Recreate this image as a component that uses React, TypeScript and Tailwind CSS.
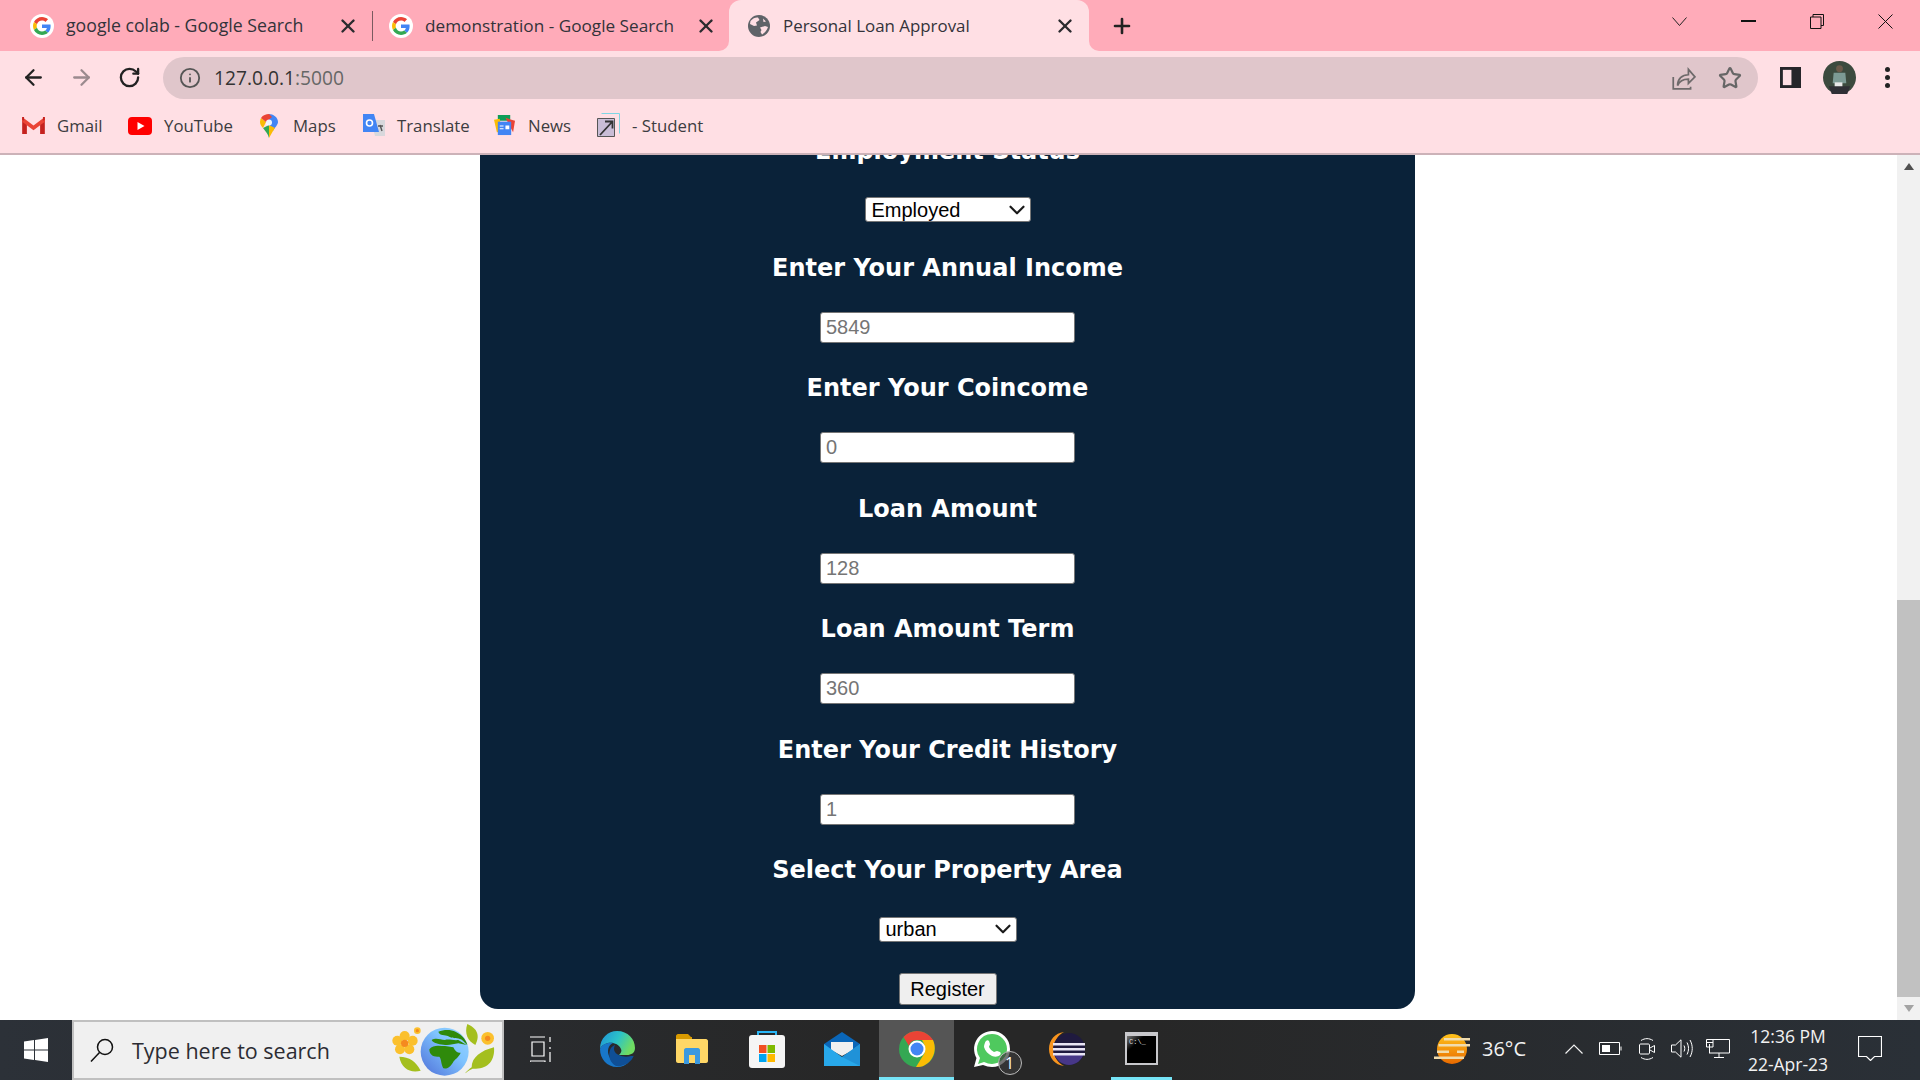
import React from "react";
import { ArrowLeft, ArrowRight, RotateCw, Info, Star, X, Plus, ChevronDown } from "lucide-react";

const GoogleG = () => (
  <span className="flex h-6 w-6 shrink-0 items-center justify-center rounded-full bg-white">
    <svg viewBox="0 0 48 48" className="h-[18px] w-[18px]">
      <path fill="#EA4335" d="M24 9.5c3.54 0 6.71 1.22 9.21 3.6l6.85-6.85C35.9 2.38 30.47 0 24 0 14.62 0 6.51 5.38 2.56 13.22l7.98 6.19C12.43 13.72 17.74 9.5 24 9.5z" />
      <path fill="#4285F4" d="M46.98 24.55c0-1.57-.15-3.09-.38-4.55H24v9.02h12.94c-.58 2.96-2.26 5.48-4.78 7.18l7.73 6c4.51-4.18 7.09-10.36 7.09-17.65z" />
      <path fill="#FBBC05" d="M10.53 28.59c-.48-1.45-.76-2.99-.76-4.59s.27-3.14.76-4.59l-7.98-6.19C.92 16.46 0 20.12 0 24c0 3.88.92 7.54 2.56 10.78l7.97-6.19z" />
      <path fill="#34A853" d="M24 48c6.48 0 11.93-2.13 15.89-5.81l-7.73-6c-2.15 1.45-4.92 2.3-8.16 2.3-6.26 0-11.57-4.22-13.47-9.91l-7.98 6.19C6.51 42.62 14.62 48 24 48z" />
    </svg>
  </span>
);

const GlobeFav = () => (
  <svg viewBox="0 0 22 22" className="h-[22px] w-[22px] shrink-0">
    <circle cx="11" cy="11" r="11" fill="#5f6368" />
    <path fill="#ffdfe4" d="M2.500 6C5 3 8 2 10 2.500L11.500 5 8 7.500 9 10.500 6 11 2 9zM12 12.500l5-1.500 3 1c-1 3-3 6-6 7.500l-1.500-2.500 1-2zM15 3.500l3 3-2.500.5z" />
  </svg>
);

const Tab = ({ title, active, icon, className, textClass }: { title: string; active?: boolean; icon: React.ReactNode; className: string; textClass: string }) => (
  <div className={`relative flex h-full shrink-0 items-center ${className} ${active ? "rounded-t-[12px] bg-[#ffdfe4]" : ""}`}>
    {icon}
    <span className={`flex-1 truncate text-[#33333a] ${textClass}`}>{title}</span>
    <X size={22} strokeWidth={2.6} className="shrink-0 text-[#2a2a2e]" />
    {active && (
      <>
        <span className="absolute bottom-0 -left-[10px] h-[10px] w-[10px] bg-[#ffdfe4]">
          <span className="block h-full w-full rounded-br-[10px] bg-[#ffabb9]" />
        </span>
        <span className="absolute bottom-0 -right-[10px] h-[10px] w-[10px] bg-[#ffdfe4]">
          <span className="block h-full w-full rounded-bl-[10px] bg-[#ffabb9]" />
        </span>
      </>
    )}
  </div>
);

const Bookmark = ({ icon, label, className }: { icon: React.ReactNode; label: string; className: string }) => (
  <div className={`flex shrink-0 items-center ${className}`}>
    {icon}
    <span className="text-[16.8px] text-[#3c3c40]">{label}</span>
  </div>
);

const headingClass = "text-[24px] font-bold leading-[28px] text-white [font-family:'DejaVu_Sans',sans-serif]";

const Field = ({ label, value }: { label: string; value: string }) => (
  <div className="flex h-[120.4px] flex-col items-center">
    <h2 className={headingClass}>{label}</h2>
    <input
      placeholder={value}
      className="mt-[30px] h-[31px] w-[255px] rounded-[3px] border border-[#767676] bg-white px-[5px] text-[20px] placeholder:text-[#757575]"
    />
  </div>
);

const Dropdown = ({ value, className }: { value: string; className: string }) => (
  <div className={`relative h-[25px] ${className}`}>
    <select className="h-full w-full appearance-none rounded-[3px] border border-[#767676] bg-white pl-[6px] text-[20px] leading-[22px] text-black [font-family:'Liberation_Sans',sans-serif]">
      <option>{value}</option>
    </select>
    <span className="pointer-events-none absolute inset-y-0 right-[1px] flex items-center">
      <ChevronDown size={26} strokeWidth={2} className="text-[#1a1a1a]" />
    </span>
  </div>
);

const TaskSlot = ({ children, active, line }: { children: React.ReactNode; active?: boolean; line?: boolean }) => (
  <div className={`relative flex h-full w-[75px] shrink-0 items-center justify-center pb-[3px] ${active ? "bg-[#555555]" : ""}`}>
    {children}
    {(active || line) && <span className={`absolute bottom-0 h-[3px] bg-[#76e4f7] ${active ? "inset-x-0" : "inset-x-[7px]"}`} />}
  </div>
);

export default function App() {
  return (
    <div className="flex h-screen w-screen flex-col overflow-hidden bg-white [font-family:'Open_Sans',sans-serif]">
      {/* tab strip */}
      <div className="flex h-[51px] shrink-0 items-center bg-[#ffabb9]">
        <Tab title="google colab - Google Search" icon={<GoogleG />} className="w-[372px] pl-[30px] pr-[13px]" textClass="ml-[12px] text-[17.7px]" />
        <span className="h-[30px] w-px shrink-0 bg-[#7a5a60]" />
        <Tab title="demonstration - Google Search" icon={<GoogleG />} className="w-[356px] pl-[16px] pr-[12px]" textClass="ml-[12px] text-[17.2px]" />
        <Tab title="Personal Loan Approval" active icon={<GlobeFav />} className="w-[360px] pl-[19px] pr-[13px]" textClass="ml-[13px] text-[16.9px]" />
        <Plus size={24} strokeWidth={2.6} className="ml-[21px] text-[#222]" />
        <div className="ml-auto flex items-center pb-[9px] pr-[27px]">
          <svg viewBox="0 0 15 9" className="h-[9px] w-[15px]" fill="none" stroke="#222" strokeWidth="1">
            <path d="M.5.500l7 8 7-8" />
          </svg>
          <span className="ml-[54px] h-[1.500px] w-[15px] bg-[#111]" />
          <svg viewBox="0 0 14 15" className="ml-[54px] h-[15px] w-[14px]" fill="none" stroke="#111" strokeWidth="1">
            <path d="M3 3V.5h10.500v11H11" />
            <path d="M.5 3h10.500v11.500H.5z" />
          </svg>
          <svg viewBox="0 0 15 15" className="ml-[54px] h-[15px] w-[15px]" fill="none" stroke="#111" strokeWidth="1">
            <path d="M.5.500l14 14M14.500.500l-14 14" />
          </svg>
        </div>
      </div>

      {/* toolbar */}
      <div className="flex h-[51px] shrink-0 items-center bg-[#ffdfe4] pb-[2px] pt-[4px]">
        <ArrowLeft size={25} strokeWidth={2.2} className="ml-[21px] shrink-0 text-[#222]" />
        <ArrowRight size={25} strokeWidth={2.2} className="ml-[23px] shrink-0 text-[#9b8a8e]" />
        <RotateCw size={23} strokeWidth={2.4} className="ml-[24px] shrink-0 text-[#222]" />
        <div className="ml-[22px] flex h-[42px] flex-1 items-center rounded-full bg-[#e0c6cb] pl-[16px] pr-[16px]">
          <Info size={22} strokeWidth={2} className="text-[#555]" />
          <span className="ml-[13px] pt-[1px] text-[19.2px] text-[#333]">
            127.0.0.1<span className="text-[#666]">:5000</span>
          </span>
          <svg viewBox="0 0 24 24" className="ml-auto h-[26px] w-[26px]" fill="none" stroke="#6e6a6b" strokeWidth="1.600">
            <path d="M3 11v11h16v-2" />
            <path d="M7 19c0-6 4-10 10-10V4l6 7-6 6v-4c-4 0-8 1-10 6z" />
          </svg>
          <Star size={24} strokeWidth={2.2} className="ml-[22px] text-[#666]" />
        </div>
        <svg viewBox="0 0 22 22" className="ml-[22px] h-[21px] w-[21px] shrink-0">
          <path fill="#26262a" d="M0 0h22v22H0z" />
          <path fill="#ffdfe4" d="M3 3h9v16H3z" />
        </svg>
        <svg viewBox="0 0 34 34" className="ml-[22px] h-[33px] w-[33px] shrink-0">
          <circle cx="17" cy="17" r="17" fill="#3c4a3e" />
          <circle cx="17" cy="8" r="3.500" fill="#6b5a4a" />
          <path fill="#7c9a94" d="M11 12h12l1 11H10z" />
          <path fill="#e8e8e8" d="M12 22h8v6h-8z" />
          <path fill="#2f2f35" d="M6 26h22l-3 8H9z" />
        </svg>
        <div className="ml-[29px] mr-[30px] flex shrink-0 flex-col gap-[3px]">
          <span className="h-[5px] w-[5px] rounded-full bg-[#222]" />
          <span className="h-[5px] w-[5px] rounded-full bg-[#222]" />
          <span className="h-[5px] w-[5px] rounded-full bg-[#222]" />
        </div>
      </div>

      {/* bookmarks */}
      <div className="flex h-[53px] shrink-0 items-center border-b-2 border-[#ccb2b8] bg-[#ffdfe4] pb-[4px] pl-[22px]">
        <Bookmark
          className="w-[106px] gap-[12px]"
          label="Gmail"
          icon={
            <svg viewBox="0 0 24 18" className="h-[17px] w-[23px]">
              <path fill="#C5221F" d="M0 2v16h5V7z" />
              <path fill="#C5221F" d="M24 2v16h-5V7z" />
              <path fill="#EA4335" d="M0 0l12 9 12-9v5l-12 9L0 5z" />
              <path fill="#C5221F" d="M0 0h2v4l-2-1zM24 0h-2v4l2-1z" />
            </svg>
          }
        />
        <Bookmark
          className="w-[132px] gap-[12px]"
          label="YouTube"
          icon={
            <svg viewBox="0 0 24 18" className="h-[18px] w-[24px]">
              <rect width="24" height="18" rx="4" fill="#FF0000" />
              <path fill="#fff" d="M9.500 5l7 4-7 4z" />
            </svg>
          }
        />
        <Bookmark
          className="w-[103px] gap-[15px]"
          label="Maps"
          icon={
            <svg viewBox="0 0 18 24" className="h-[24px] w-[18px]">
              <path fill="#34A853" d="M9 24c-1-4-3-6-6-10l6-3z" />
              <path fill="#FBBC04" d="M3 14C1 12 0 10 0 8c0-1 .3-2 1-4l5 4z" />
              <path fill="#4285F4" d="M9 0c4 0 9 3 9 8 0 3-3 5-5 9L6 8z" />
              <path fill="#EA4335" d="M1 4c2-3 5-4 8-4l3 3-6 5z" />
              <path fill="#FBBC04" d="M9 24l4-7 2-3-6-3z" />
              <circle cx="9" cy="8.500" r="3" fill="#fff" opacity="0.9" />
            </svg>
          }
        />
        <Bookmark
          className="w-[131px] gap-[12px]"
          label="Translate"
          icon={
            <svg viewBox="0 0 22 24" className="h-[24px] w-[22px]">
              <path fill="#d8d8dc" d="M8 6h14v16H12z" />
              <path fill="#4285F4" d="M0 0h11l5 18H0z" />
              <circle cx="6.500" cy="9" r="3" fill="none" stroke="#fff" strokeWidth="1.600" />
              <path stroke="#555" strokeWidth="1.400" d="M15 12h5M17 11l2 6" />
            </svg>
          }
        />
        <Bookmark
          className="w-[103px] gap-[13px]"
          label="News"
          icon={
            <svg viewBox="0 0 22 22" className="h-[21px] w-[21px]">
              <path fill="#0F9D58" d="M4 0h13v6H4z" />
              <path fill="#EA4335" d="M12 3l10 3-2 12z" />
              <path fill="#FBBC04" d="M0 5l6-1 2 14H3z" />
              <path fill="#4285F4" d="M4 7h14v14H4z" />
              <path fill="#fff" d="M6 11h4v1H6zM6 14h4v1H6zM12 11h4v4h-4z" />
            </svg>
          }
        />
        <Bookmark
          className="w-[120px] gap-[12px]"
          label="- Student"
          icon={
            <svg viewBox="0 0 23 25" className="h-[25px] w-[23px]" fill="none">
              <path stroke="#7fd6e4" d="M4.500.5h18v20" />
              <path fill="#c9bdd6" stroke="#555" d="M.5 5.500h17v18H.5z" />
              <path stroke="#333" strokeWidth="1.800" d="M3 22L15 9M8 8.500h7.500v7" />
            </svg>
          }
        />
      </div>

      {/* page viewport */}
      <div className="flex min-h-0 flex-1">
        <div className="flex-1 overflow-hidden">
          <div className="ml-[480px] -mt-[24px] flex h-[878px] w-[935px] flex-col items-center rounded-b-[18px] bg-[#0a2239] pt-[6px]">
            <h2 className={headingClass}>Employment Status</h2>
            <Dropdown value="Employed" className="mb-[32px] mt-[32px] w-[166px]" />
            <div className="[font-family:'Liberation_Sans',sans-serif]">
              <Field label="Enter Your Annual Income" value="5849" />
              <Field label="Enter Your Coincome" value="0" />
              <Field label="Loan Amount" value="128" />
              <Field label="Loan Amount Term" value="360" />
              <Field label="Enter Your Credit History" value="1" />
            </div>
            <h2 className={headingClass}>Select Your Property Area</h2>
            <Dropdown value="urban" className="mt-[33px] w-[138px]" />
            <button className="mt-[31px] h-[32px] w-[98px] rounded-[3px] border border-[#767676] bg-[#efefef] text-[20px] text-black [font-family:'Liberation_Sans',sans-serif]">
              Register
            </button>
          </div>
        </div>
        {/* scrollbar */}
        <div className="flex w-[23px] shrink-0 flex-col items-center bg-[#f1f1f1]">
          <div className="flex h-[23px] w-full shrink-0 items-center justify-center">
            <span className="h-0 w-0 border-x-[5.5px] border-b-[7px] border-x-transparent border-b-[#505050]" />
          </div>
          <div className="mt-[422px] h-[398px] w-full bg-[#c1c1c1]" />
          <div className="mt-auto flex h-[23px] w-full shrink-0 items-center justify-center">
            <span className="h-0 w-0 border-x-[5.5px] border-t-[7px] border-x-transparent border-t-[#a3a3a3]" />
          </div>
        </div>
      </div>

      {/* taskbar */}
      <div className="flex h-[60px] shrink-0 items-center bg-[linear-gradient(90deg,#2c3138_0%,#272727_45%,#272727_60%,#2a3037_100%)] text-white">
        <div className="flex h-full w-[72px] shrink-0 items-center justify-center">
          <svg viewBox="0 0 24 24" className="h-[24px] w-[24px]" fill="#fff">
            <path d="M0 3.500l10-1.400v9.400H0zM11 2l13-2v11.500H11zM0 12.500h10v9.400L0 20.500zM11 12.500h13V24l-13-2z" />
          </svg>
        </div>
        <div className="flex h-full w-[432px] shrink-0 items-center border-2 border-[#c0c0c0] bg-[#f0f0f0] pl-[16px]">
          <svg viewBox="0 0 24 24" className="h-[24px] w-[24px] shrink-0" fill="none" stroke="#111" strokeWidth="1.500">
            <circle cx="15" cy="9" r="7.500" />
            <path d="M9.500 14.500L1 23.500" />
          </svg>
          <span className="ml-[18px] pt-[2px] text-[21.5px] text-[#2c2c33]">Type here to search</span>
          <svg viewBox="0 2 112 56" className="ml-auto h-[56px] w-[112px] shrink-0">
            <defs>
              <linearGradient id="earth" x1="0" y1="1" x2="1" y2="0">
                <stop offset="0" stopColor="#4f6fd8" />
                <stop offset="0.6" stopColor="#7fc4ff" />
                <stop offset="1" stopColor="#9ad4ff" />
              </linearGradient>
            </defs>
            <g transform="scale(0.3333)">
              <g fill="#fbc02d">
                <circle cx="44" cy="48" r="15" />
                <circle cx="68" cy="62" r="15" />
                <circle cx="58" cy="88" r="15" />
                <circle cx="30" cy="88" r="15" />
                <circle cx="22" cy="62" r="15" />
                <circle cx="82" cy="32" r="10" />
                <circle cx="293" cy="55" r="19" />
              </g>
              <circle cx="44" cy="70" r="11" fill="#f58a1f" />
              <circle cx="82" cy="32" r="5" fill="#f58a1f" />
              <circle cx="293" cy="55" r="8" fill="#f58a1f" />
              <path fill="#a4bf1e" d="M232 12c24 10 42 30 24 63-22-12-34-34-24-63zM28 110c30 0 50 14 64 42-30 8-58-6-64-42zM312 82c4 40-20 68-62 64-6 0-16 8-25 14 8-8 14-14 20-18 0-30 28-50 67-60z" />
              <circle cx="164" cy="95" r="72" fill="url(#earth)" />
              <path fill="#2f8a0b" d="M145 35c25-10 55-7 77 20 4 6 8 12 10 20-10-8-14-16-22-18-12-4-24 0-35-8-10-6-25 0-30-14zM125 60c15-8 25 0 40 0 10-4 25 2 40 0l25 15-25-5c-15 2-30 8-45 4-15-2-30-4-35-14zM118 88c12-16 32-10 47-10l25 4c6 13 15 18 22 16-6 14-17 20-22 27-5 10-15 23-30 20-8-15-5-27-12-35-18 2-30-5-30-22z" />
            </g>
          </svg>
        </div>
        <div className="flex h-full w-[75px] shrink-0 items-center justify-center">
          <svg viewBox="0 0 24 28" className="h-[28px] w-[24px]" fill="none" stroke="#fff" strokeWidth="1.200">
            <path d="M0 1h15M2 6h12v14H2zM0 26V25h15v1M20 1v5M20 11v2M20 16v10" />
          </svg>
        </div>
        <TaskSlot>
          <svg viewBox="0 0 36 36" className="h-[36px] w-[36px]">
            <defs>
              <linearGradient id="edge" x1="0" y1="0" x2="1" y2="0.4">
                <stop offset="0" stopColor="#1d8fd8" />
                <stop offset="0.55" stopColor="#2cc3c8" />
                <stop offset="1" stopColor="#6fdc62" />
              </linearGradient>
            </defs>
            <path fill="url(#edge)" d="M1 18C1 7 9 0 18 0c11 0 18 8 18 17 0 5-4 7-8 7h-8c2-2 3-4 2-6-2-5-8-7-13-6-4 1-7 3-8 6z" />
            <path fill="#1877c9" d="M1 18c2-5 8-7 13-6-5 2-6 8-4 13 3 7 12 11 20 6-3 3-7 5-12 5C8 36 1 28 1 18z" />
            <path fill="#0f4f96" d="M20 24c4 2 8 2 12 1 2 0 3 0 3-1-2 7-10 12-18 11-6-3-8-10-6-16 1-3 3-4 5-5-2 4-1 8 4 10z" />
          </svg>
        </TaskSlot>
        <TaskSlot>
          <svg viewBox="0 0 32 30" className="h-[30px] w-[32px]">
            <path fill="#d99a00" d="M0 2c0-1 1-2 2-2h10l3 3h1v6H0z" />
            <path fill="#ffd766" d="M0 5h30c1 0 2 1 2 2v20c0 1-1 2-2 2H2c-1 0-2-1-2-2z" />
            <path fill="#3b99e0" d="M8 16c0-1 1-2 2-2h12c1 0 2 1 2 2v14h-5v-9h-6v9H8z" />
          </svg>
        </TaskSlot>
        <TaskSlot>
          <svg viewBox="0 0 36 38" className="h-[38px] w-[36px]">
            <path fill="none" stroke="#29b6f6" strokeWidth="2" d="M9 8V2h18v6" />
            <rect y="5" width="36" height="33" rx="3" fill="#f5f5f5" />
            <path fill="#f25022" d="M10 15h7.500v8H10z" />
            <path fill="#7fba00" d="M18.500 15H26v8h-7.500z" />
            <path fill="#00a4ef" d="M10 24h7.500v8H10z" />
            <path fill="#ffb900" d="M18.500 24H26v8h-7.500z" />
          </svg>
        </TaskSlot>
        <TaskSlot>
          <svg viewBox="0 0 36 34" className="h-[34px] w-[36px]">
            <path fill="#0a66b8" d="M18 0L36 12v8H0v-8z" />
            <path fill="#f0f0f0" d="M7 10h22v8l-11 6-11-6z" />
            <path fill="#28a8ea" d="M0 12l18 13 18-13v22H0z" />
            <path fill="#1b83cc" d="M18 25l18-13v22z" opacity="0.6" />
          </svg>
        </TaskSlot>
        <TaskSlot active>
          <svg viewBox="0 0 36 36" className="h-[36px] w-[36px]">
            <circle cx="18" cy="18" r="18" fill="#34a853" />
            <path fill="#ea4335" d="M18 0c7 0 13 4 16 9H18c-4 0-7 2-8 6L4.500 6C8 2 13 0 18 0z" />
            <path fill="#fbbc05" d="M34 9c4 9 1 20-8 25-3 2-6 2-9 2l8-13c2-4 1-9-2-14z" />
            <circle cx="18" cy="18" r="8.500" fill="#fff" />
            <circle cx="18" cy="18" r="6.500" fill="#4285f4" />
          </svg>
        </TaskSlot>
        <TaskSlot>
          <div className="relative">
            <svg viewBox="0 0 36 36" className="h-[36px] w-[36px]">
              <path fill="#fff" d="M18 0a18 18 0 0 1 0 36c-3 0-6-1-9-2l-9 2 2.500-9A18 18 0 0 1 18 0z" />
              <path fill="#4fc95e" d="M18 3a15 15 0 0 1 0 30c-3 0-5-1-8-2l-6 2 2-6A15 15 0 0 1 18 3z" />
              <path fill="#fff" d="M12 10c1-1 2-1 3 0l1 3c0 1-1 2-1 3 1 2 3 4 5 5 1 0 2-1 3-1l3 1c1 1 1 2 0 3-2 2-5 2-8 1-4-2-7-5-8-9 0-2 1-5 2-6z" />
            </svg>
            <span className="absolute -bottom-[8px] -right-[12px] flex h-[24px] w-[24px] items-center justify-center rounded-full border border-[#bbb] bg-[#3a3a3a]/70 text-[16px] leading-none">1</span>
          </div>
        </TaskSlot>
        <TaskSlot>
          <svg viewBox="0 0 36 34" className="h-[34px] w-[36px]">
            <path fill="#f7941e" d="M15 0C6 1 0 8 0 17s6 16 15 17C9 31 5 25 5 17S9 3 15 0z" />
            <circle cx="20" cy="17" r="16" fill="#1f1a3f" />
            <path fill="#473788" d="M5 21h30c-2 7-8 12-15 12S7 28 5 21z" />
            <path fill="#e8e4f4" d="M4 11h32v2.500H4zM4 16h32v2.500H4zM4 21h32v2.500H4z" />
          </svg>
        </TaskSlot>
        <TaskSlot line>
          <svg viewBox="0 0 33 33" className="h-[33px] w-[33px]">
            <defs>
              <linearGradient id="cmd" x1="0" y1="0" x2="0.6" y2="0.6">
                <stop offset="0" stopColor="#777" />
                <stop offset="0.5" stopColor="#000" />
              </linearGradient>
            </defs>
            <rect width="33" height="33" fill="#c8c8cc" />
            <rect x="2" y="4" width="29" height="27" fill="url(#cmd)" />
            <text x="4" y="12" fontSize="7" fill="#ddd" fontFamily="Liberation Mono">C:\_</text>
          </svg>
        </TaskSlot>

        {/* tray */}
        <div className="ml-auto flex h-full items-center pb-[3px] text-[#f2f2f2]">
          <svg viewBox="5 10 36 30" className="h-[30px] w-[36px] shrink-0">
            <defs>
              <linearGradient id="sun" x1="0" y1="0" x2="0" y2="1">
                <stop offset="0" stopColor="#ffc21a" />
                <stop offset="1" stopColor="#e96a00" />
              </linearGradient>
            </defs>
            <circle cx="23" cy="25" r="15" fill="url(#sun)" />
            <path fill="#f0dcae" d="M15 14h26v2.500H15zM9.500 20H41v2.500H9.500zM8 26.500h12V29H8zM28 26.500h7V29h-7zM5 32.500h30V35H5z" />
          </svg>
          <span className="ml-[12px] w-[44px] text-[20px]">36°C</span>
          <svg viewBox="0 0 18 10" className="ml-[39px] h-[10px] w-[18px] shrink-0" fill="none" stroke="#f2f2f2" strokeWidth="1.200">
            <path d="M.5 9.500L9 1l8.500 8.500" />
          </svg>
          <svg viewBox="0 0 23 13" className="ml-[16px] h-[13px] w-[23px] shrink-0" fill="none" stroke="#fff">
            <path d="M.5.500h20v12H.5zM22 4.500v4" />
            <path fill="#fff" stroke="none" d="M3 3h8v7H3z" />
          </svg>
          <svg viewBox="0 0 16 22" className="ml-[17px] h-[22px] w-[16px] shrink-0" fill="none" stroke="#fff">
            <path d="M.5 7c0-.5.500-1 1-1h8c.5 0 1 .5 1 1v8c0 .5-.5 1-1 1h-8c-.5 0-1-.5-1-1zM11 10l4.500-2.500v7L11 12M2 2.500c4-2.500 8-2.500 12 0M2 19.500c4 2.500 8 2.500 12 0" />
          </svg>
          <svg viewBox="0 0 22 19" className="ml-[16px] h-[19px] w-[22px] shrink-0" fill="none" stroke="#fff">
            <path d="M.5 6h4L10 .8v17.400L4.500 13h-4zM13 6.500c1 2 1 4 0 6M16 3.500c2 4 2 8 0 12M19 1c3 5.500 3 11.500 0 17" />
          </svg>
          <svg viewBox="0 0 24 19" className="ml-[13px] h-[19px] w-[24px] shrink-0" fill="none" stroke="#fff">
            <path d="M7 .5h16.500V14H3M13 14v4M8 18.500h10M.5.500H7V8H.5zM.5 3.500H7M3.500 5v9" />
          </svg>
          <div className="ml-[13px] flex w-[90px] flex-col items-center pt-[3px] text-[17.5px] leading-[28px]">
            <span>12:36 PM</span>
            <span>22-Apr-23</span>
          </div>
          <svg viewBox="0 0 24 25" className="ml-[25px] mr-[38px] h-[25px] w-[24px] shrink-0" fill="none" stroke="#fff" strokeWidth="1.200">
            <path d="M.5.500h23v20h-7l-4 4-4-4h-8z" />
          </svg>
        </div>
      </div>
    </div>
  );
}
